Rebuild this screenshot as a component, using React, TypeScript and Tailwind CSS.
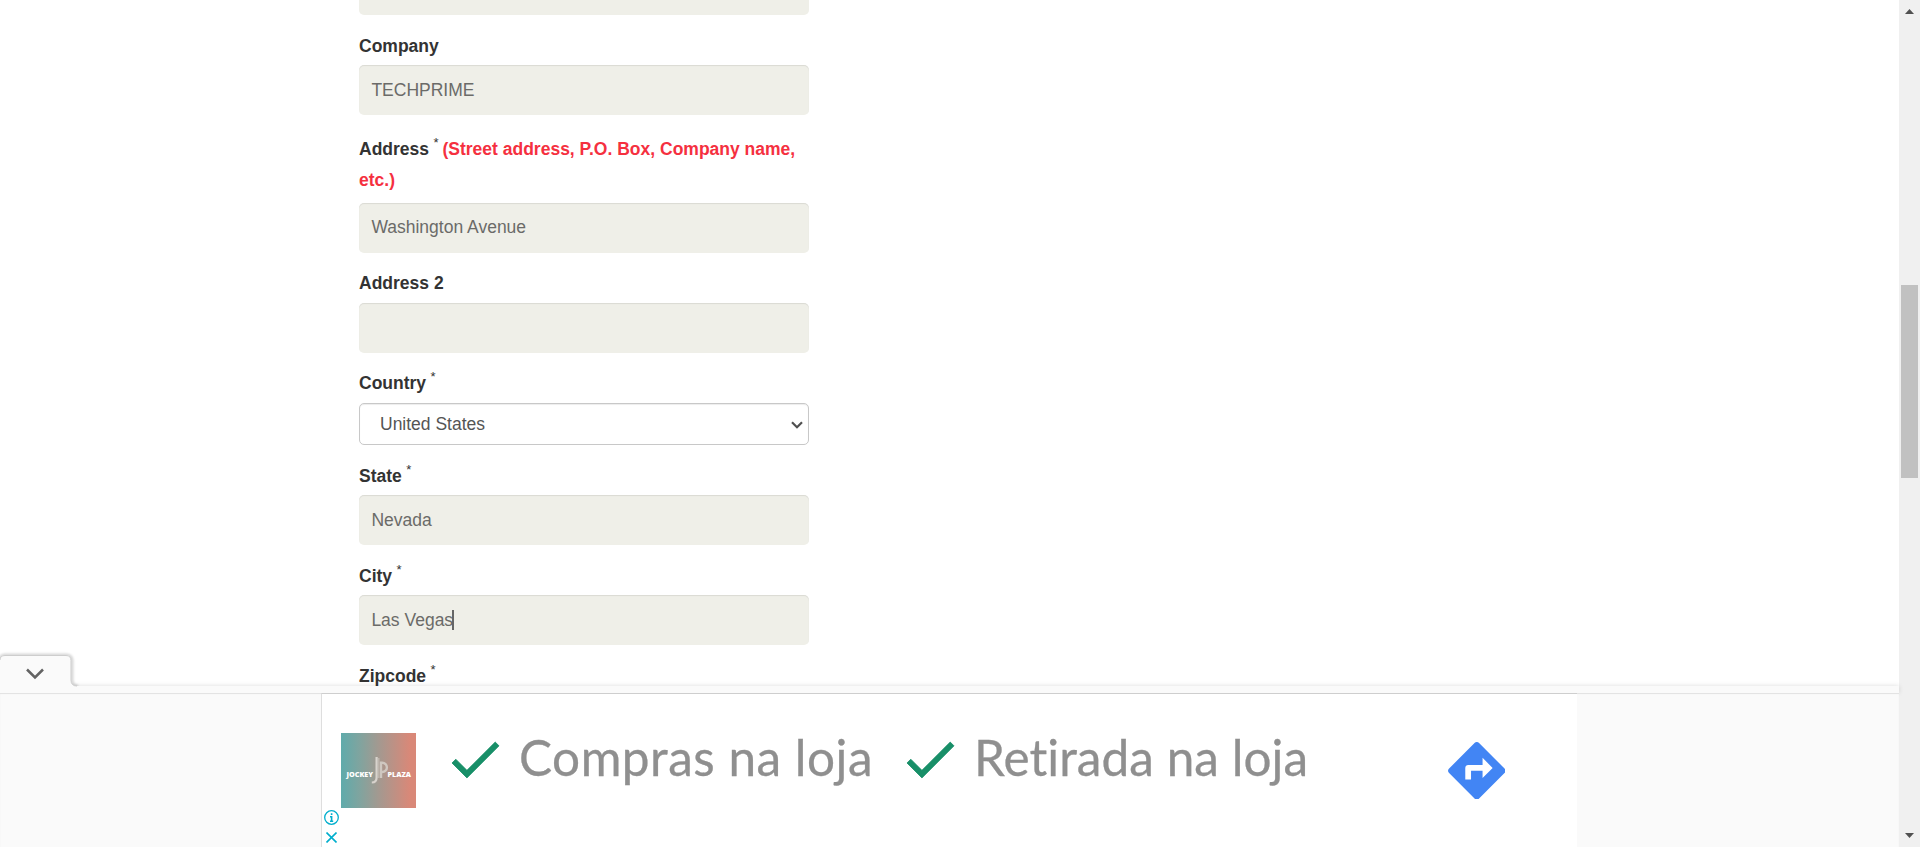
import type { ReactNode } from "react";

function Star() {
  return <span className="-ml-[0.5px] align-[8px] text-[13px] leading-[0px] font-normal">*</span>;
}

function Label({ children, required, raised }: { children: ReactNode; required?: boolean; raised?: boolean }) {
  return (
    <label
      className={
        raised
          ? "block h-[50px] pt-[15px] text-[17.5px] leading-[31px] font-bold text-[#333]"
          : "block h-[50px] pt-[16px] text-[17.5px] leading-[31px] font-bold text-[#333]"
      }
    >
      {children}
      {required && (
        <>
          {" "}
          <Star />
        </>
      )}
    </label>
  );
}

function Field({ value, caret, raised }: { value?: string; caret?: boolean; raised?: boolean }) {
  return (
    <div className="flex h-[50px] w-[450px] items-center rounded-[5px] bg-[#efefe8] pr-3 pl-[12.4px] text-[17.5px] leading-5 text-[#6b6b68] shadow-[inset_0_1px_1px_rgba(0,0,0,0.09)]">
      <span className={raised ? "-mt-0.5" : ""}>{value}</span>
      {caret && <span className="-ml-px h-5 w-[2px] bg-[#666]" />}
    </div>
  );
}

function Check() {
  return (
    <svg className="h-9 w-[47px] shrink-0 overflow-visible" viewBox="3.41 5.59 17.59 13.41" fill="#188f68" stroke="#188f68" strokeWidth=".3">
      <path d="M9 16.17 4.83 12l-1.42 1.41L9 19 21 7l-1.41-1.41z" />
    </svg>
  );
}

function JockeyLogo() {
  return (
    <div className="relative flex h-[75px] w-[75px] items-center justify-between bg-[linear-gradient(90deg,#5fabab_0%,#80a49f_25%,#a39990_50%,#c38f82_75%,#d98878_92%)] pt-[9px] pr-[5px] pl-[5.5px] font-['Open_Sans',sans-serif] text-[7.2px] leading-none font-extrabold text-white">
      <span>JOCKEY</span>
      <span>PLAZA</span>
      <svg className="absolute top-[23px] left-[30px] h-[29px] w-[18px]" viewBox="0 0 18 29" fill="none" stroke="#d8d3cd">
        <path d="M5.600 1v20.500q0 5-4.800 5" strokeWidth="2.200" />
        <path d="M7.800 2v20" strokeWidth="1.200" opacity=".6" />
        <path d="M10 22V6.800h1.300a4.500 4.500 0 0 1 0 9.200h-.3" strokeWidth="2.400" opacity=".8" />
      </svg>
    </div>
  );
}

function Form() {
  return (
    <form className="ml-[359px] w-[450px]">
      <div className="h-[15px] rounded-b-[5px] bg-[#efefe8]" />
      <Label>Company</Label>
      <Field value="TECHPRIME" />
      <label className="block h-[88px] pt-[19px] text-[17.5px] leading-[31px] font-bold text-[#333]">
        Address <Star />
        <span className="ml-1 text-[#f5303f]">(Street address, P.O. Box, Company name, etc.)</span>
      </label>
      <Field value="Washington Avenue" raised />
      <Label raised>Address 2</Label>
      <Field />
      <Label required raised>
        Country
      </Label>
      <div className="flex h-[42px] items-center justify-between rounded-[5px] border border-[#c8c8c8] bg-white pr-[5px] pl-5 text-[17.5px] leading-5 text-[#555] shadow-[inset_0_1px_1px_rgba(0,0,0,0.075)]">
        <span>United States</span>
        <svg className="mt-px h-2 w-3" viewBox="0 0 12 8" fill="none" stroke="#505050" strokeWidth="2.200">
          <path d="m1 1.300 5 5 5-5" />
        </svg>
      </div>
      <Label required>State</Label>
      <Field value="Nevada" />
      <Label required>City</Label>
      <Field value="Las Vegas" caret />
      <Label required>Zipcode</Label>
    </form>
  );
}

function AdBanner() {
  return (
    <div className="flex h-[154px] justify-start bg-[#fafafa] shadow-[inset_0_1px_1px_rgba(0,0,0,0.1)]">
      <div className="ml-[321px] flex h-full w-[1256px] border-t border-l border-t-[#cecece] border-l-[#dedede] bg-white">
        <div className="flex w-[94px] shrink-0 flex-col pt-[39px] pl-[19px]">
          <JockeyLogo />
          <div className="mt-[2px] -ml-[17px] flex flex-col gap-[7px]">
            <svg className="h-[15px] w-[15px]" viewBox="0 0 15 15" fill="none" stroke="#00aecd">
              <circle cx="7.500" cy="7.500" r="6.800" strokeWidth="1.300" />
              <path d="M7.600 3.200v1.800M6 6.700h1.600v4.300M6 11.200h3.200" strokeWidth="1.600" />
            </svg>
            <svg className="ml-[2px] h-[11px] w-[11px]" viewBox="0 0 11 11" fill="none" stroke="#00aecd" strokeWidth="1.600">
              <path d="m.5.5 10 10M10.500.5l-10 10" />
            </svg>
          </div>
        </div>
        <div className="flex items-start pt-[48px] pl-[35.5px] font-['Lato',sans-serif] text-[49.5px] leading-[36px] whitespace-nowrap text-[#8f8f8f] [font-variant-ligatures:none] [-webkit-text-stroke:0.3px_#8f8f8f]">
          <Check />
          <span className="-mt-[3px] ml-[20.5px] w-[387.5px] tracking-[0.5px]">Compras na loja</span>
          <Check />
          <span className="-mt-[3px] ml-[20.5px] w-[473.8px] tracking-[0.05px]">Retirada na loja</span>
          <svg className="-mt-[0.5px] h-[57.6px] w-[57.6px]" viewBox="2 2 20 20" fill="#4285f4">
            <path d="M21.710 11.290l-9-9c-.39-.39-1.020-.39-1.410 0l-9 9c-.39.39-.39 1.020 0 1.410l9 9c.39.39 1.020.39 1.410 0l9-9c.39-.38.39-1.010 0-1.410zM14 14.500V12h-4v3H8v-4c0-.55.45-1 1-1h5V7.500l3.500 3.500-3.500 3.500z" />
          </svg>
        </div>
      </div>
    </div>
  );
}

function Scrollbar() {
  return (
    <div className="flex h-full w-[21px] shrink-0 flex-col items-center bg-[#f0f0f0]">
      <svg className="mt-[9px] h-[5px] w-[9px]" viewBox="0 0 9 5" fill="#505050">
        <path d="M4.500 0 9 5H0z" />
      </svg>
      <div className="mt-[271px] h-[193px] w-[17px] bg-[#c1c1c1]" />
      <svg className="mt-auto mb-[9px] h-[5px] w-[9px]" viewBox="0 0 9 5" fill="#505050">
        <path d="M0 0h9L4.500 5z" />
      </svg>
    </div>
  );
}

export default function App() {
  return (
    <div className="flex h-[847px] w-[1920px] overflow-hidden bg-white font-['Liberation_Sans',Arial,sans-serif]">
      <main className="flex h-full w-[1899px] flex-col">
        <div className="h-[686px] overflow-hidden">
          <Form />
        </div>
        <div className="relative h-[161px] shrink-0">
          <div className="h-[7px] bg-[#fafafa] shadow-[0_0_5px_rgba(0,0,0,0.14)]" />
          <AdBanner />
          <svg className="absolute -top-[35px] left-0 h-[40px] w-[90px]" viewBox="0 0 90 40" fill="none">
            <path d="M0 9q0-5 5-5h61q6 0 6 6v19q0 6 6 6" stroke="#000" strokeOpacity=".16" strokeWidth="3" className="blur-[1px]" />
            <path d="M0 40V9q0-5 5-5h61q5 0 5 5v20q0 6 6 6h13v5z" fill="#fafafa" />
            <path d="M0 9q0-4.500 5-4.500h61q5 0 5 5v19.500q0 6 6 6" stroke="#cdcdcd" />
            <path d="m27 18.500 8 8 8-8" stroke="#636363" strokeWidth="2.500" />
          </svg>
        </div>
      </main>
      <Scrollbar />
    </div>
  );
}
